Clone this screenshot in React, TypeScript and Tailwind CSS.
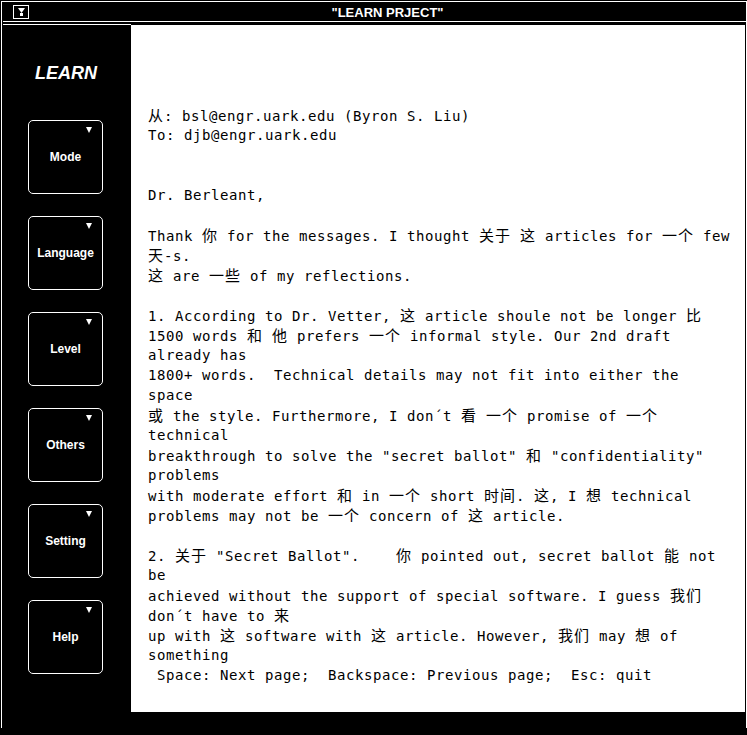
import React from "react";

const lines = [
  "从: bsl@engr.uark.edu (Byron S. Liu)",
  "To: djb@engr.uark.edu",
  "",
  "",
  "Dr. Berleant,",
  "",
  "Thank 你 for the messages. I thought 关于 这 articles for 一个 few",
  "天-s.",
  "这 are 一些 of my reflections.",
  "",
  "1. According to Dr. Vetter, 这 article shoule not be longer 比",
  "1500 words 和 他 prefers 一个 informal style. Our 2nd draft",
  "already has",
  "1800+ words.  Technical details may not fit into either the",
  "space",
  "或 the style. Furthermore, I don´t 看 一个 promise of 一个",
  "technical",
  'breakthrough to solve the "secret ballot" 和 "confidentiality"',
  "problems",
  "with moderate effort 和 in 一个 short 时间. 这, I 想 technical",
  "problems may not be 一个 concern of 这 article.",
  "",
  '2. 关于 "Secret Ballot".    你 pointed out, secret ballot 能 not',
  "be",
  "achieved without the support of special software. I guess 我们",
  "don´t have to 来",
  "up with 这 software with 这 article. However, 我们 may 想 of",
  "something",
  " Space: Next page;  Backspace: Previous page;  Esc: quit",
];

const menus = ["Mode", "Language", "Level", "Others", "Setting", "Help"];

// split a line into latin / chinese runs so the hanzi get their own width
function TextLine({ text }: { text: string }) {
  const parts = text.split(/([\u3400-\u9fff]+)/);
  return (
    <div className="h-[20px] leading-[20px] whitespace-pre">
      {parts.map((p, i) =>
        i % 2 === 1 ? (
          <span
            key={i}
            className="font-['Noto_Sans_CJK_SC',sans-serif] text-[15px] tracking-[1px]"
          >
            {p}
          </span>
        ) : (
          <span key={i}>{p}</span>
        )
      )}
    </div>
  );
}

function Triangle({ w = 6, h = 6 }: { w?: number; h?: number }) {
  return (
    <svg width={w} height={h} viewBox={`0 0 ${w} ${h}`}>
      <polygon points={`0,0 ${w},0 ${w / 2},${h}`} fill="white" />
    </svg>
  );
}

function MenuButton({ label }: { label: string }) {
  return (
    <div className="relative w-[75px] h-[74px] rounded-[5px] border border-white flex items-center justify-center">
      <div className="absolute top-[6px] right-[10px] flex">
        <Triangle />
      </div>
      <span className="text-white text-[12px] font-bold">{label}</span>
    </div>
  );
}

export default function App() {
  return (
    <div className="w-[747px] h-[735px] bg-black pt-px pl-px font-['Liberation_Sans',sans-serif]">
      {/* window frame */}
      <div className="w-[746px] h-[727px] border-l border-r border-t border-white">
        {/* title bar */}
        <div className="flex items-center h-[19px]">
          <div className="ml-[11px] mt-px w-[16px] h-[14px] border border-white flex flex-col items-center justify-center">
            <Triangle w={7} h={5} />
            <div className="w-[3px] h-[3px] bg-white" />
          </div>
          <div className="flex-1 text-center text-white text-[13px] font-bold leading-none pt-[2px]">
            "LEARN PRJECT"
          </div>
        </div>
        <div className="ml-px h-px bg-white" />

        <div className="flex pl-px">
          {/* sidebar */}
          <div className="w-[128px] flex flex-col pt-[2px]">
            <div className="h-px bg-white" />
            <div className="mt-[37px] h-[22px] leading-[22px] text-center text-white text-[18px] font-bold italic pr-[2px]">
              LEARN
            </div>
            <div className="mt-[36px] pl-[25px] flex flex-col gap-[22px]">
              {menus.map((m) => (
                <MenuButton key={m} label={m} />
              ))}
            </div>
          </div>

          {/* message page */}
          <div className="mt-[3px] w-[614px] h-[687px] bg-white pl-[17px] pt-[80px] text-black text-[14px] tracking-[0.57px] font-['DejaVu_Sans_Mono','Noto_Sans_CJK_SC',monospace]">
            {lines.map((l, i) => (
              <TextLine key={i} text={l} />
            ))}
          </div>
        </div>
      </div>
    </div>
  );
}
